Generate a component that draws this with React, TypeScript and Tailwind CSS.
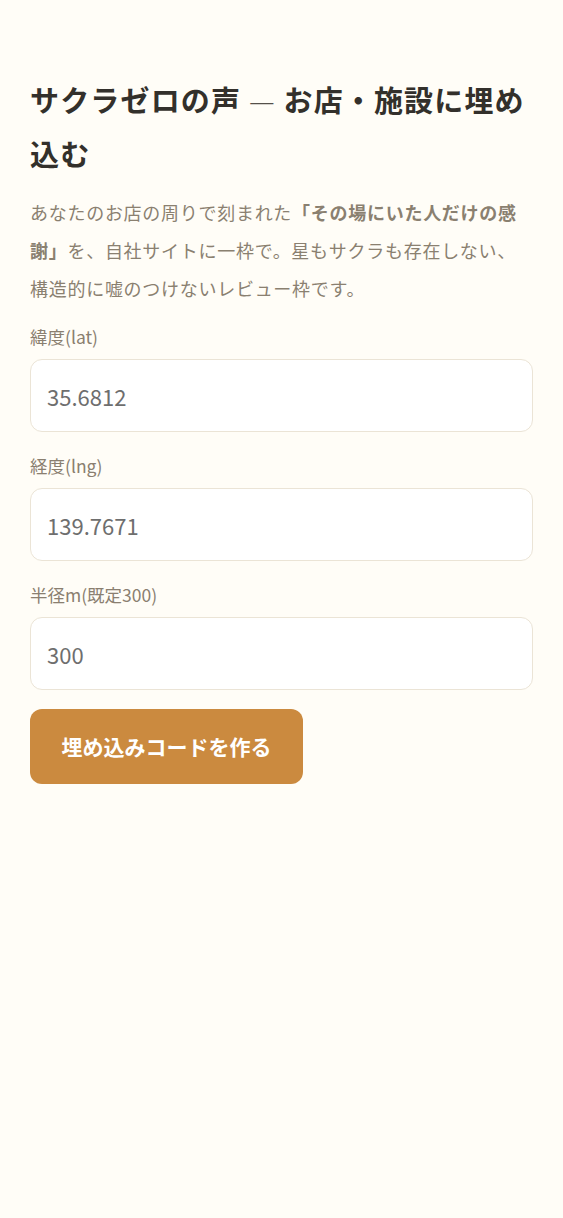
const font = {
  fontFamily: '"Noto Sans CJK JP", "Noto Sans", sans-serif',
};

function Field({ label, value }: { label: string; value: string }) {
  return (
    <label className="block">
      <span className="block text-[17.5px] leading-[24px] text-[#8a7f70]">
        {label}
      </span>
      <input
        defaultValue={value}
        className="mt-[10px] block h-[73px] w-full rounded-[12px] border border-[#ebe4d6] bg-white px-4 text-[22px] text-[#6e6e6e] outline-none"
      />
    </label>
  );
}

export default function App() {
  return (
    <div className="min-h-[1218px] bg-[#fffdf7]" style={font}>
      <main className="px-[30px] pt-[72px]">
        <h1 className="text-[29px] font-bold leading-[54px] tracking-[0.04em] text-[#33302b]">
          サクラゼロの声 <span className="font-light text-[#55504a]">—</span>{" "}
          お店・施設に埋め込む
        </h1>
        <p className="mt-[13px] text-[18px] leading-[38px] tracking-[0.04em] text-[#8a8070]">
          あなたのお店の周りで刻まれた
          <b className="font-bold">「その場にいた人だけの感謝」</b>
          を、自社サイトに一枠で。星もサクラも存在しない、構造的に嘘のつけないレビュー枠です。
        </p>
        <div className="mt-[18px] space-y-[22px]">
          <Field label="緯度(lat)" value="35.6812" />
          <Field label="経度(lng)" value="139.7671" />
          <Field label="半径m(既定300)" value="300" />
        </div>
        <button className="mt-[19px] h-[75px] w-[273px] rounded-[12px] bg-[#cb8a3f] text-[21px] font-bold text-white">
          埋め込みコードを作る
        </button>
      </main>
    </div>
  );
}
